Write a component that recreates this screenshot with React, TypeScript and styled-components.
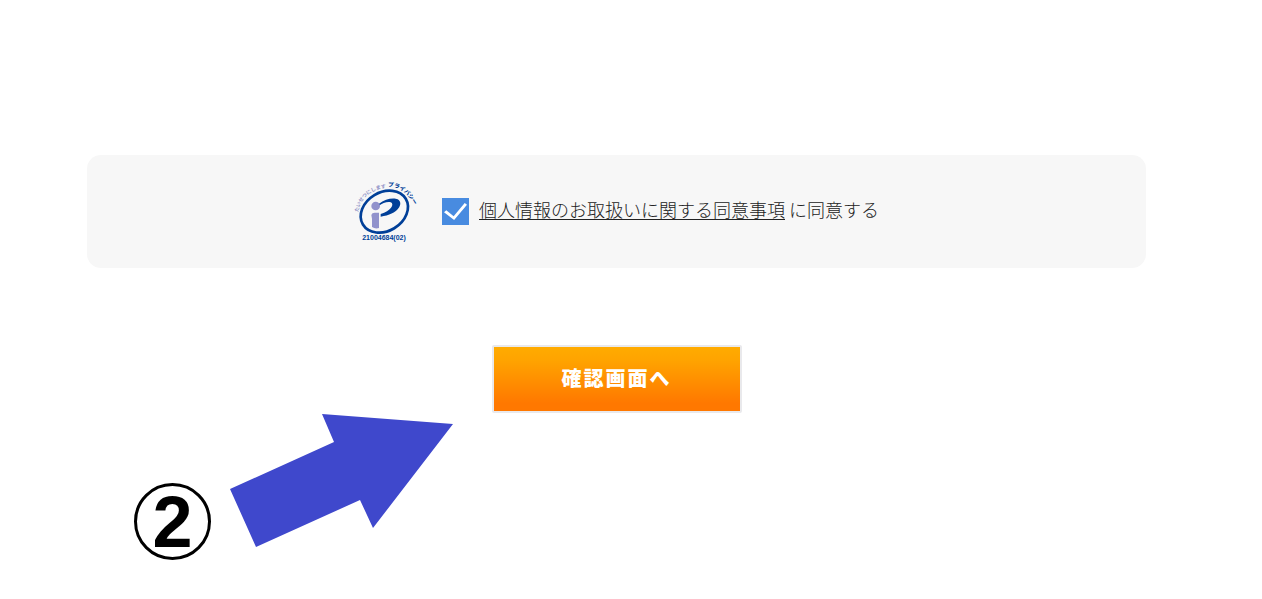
import React, { useState } from "react";
import styled, { createGlobalStyle } from "styled-components";

const GlobalStyle = createGlobalStyle`
  *, *::before, *::after { box-sizing: border-box; }
  body {
    margin: 0;
    background: #fff;
    color: #222;
    font-family: "Noto Sans CJK JP", sans-serif;
  }
`;

const Page = styled.main`
  display: flex;
  flex-direction: column;
  padding: 155px 116px 32px 87px;
`;

const ConsentPanel = styled.section`
  display: flex;
  align-items: center;
  justify-content: center;
  gap: 28px;
  padding: 24px;
  border-radius: 14px;
  background: #f7f7f7;
`;

const MarkSvg = styled.svg`
  display: block;
  width: 60px;
  height: 65px;
  overflow: visible;
`;

const Consent = styled.div`
  display: flex;
  align-items: flex-start;
  gap: 10px;
`;

const Checkbox = styled.input`
  appearance: none;
  width: 27px;
  height: 27px;
  margin: 0;
  background: #488be0;
  display: grid;
  place-items: center;
  cursor: pointer;

  &:not(:checked) {
    background: #fff;
    border: 1px solid #aaa;
  }

  &:checked::before {
    content: "";
    width: 23px;
    height: 17px;
    background: #fff;
    clip-path: polygon(0 54%, 10% 42%, 42% 78%, 90% 0, 100% 10%, 44% 100%);
  }
`;

const ConsentText = styled.label`
  font-size: 18px;
  font-weight: 300;
  line-height: 22px;
`;

const TermsLink = styled.a`
  color: inherit;
  text-decoration: underline;
  text-decoration-thickness: 1px;
  text-underline-offset: 2px;
`;

const SubmitButton = styled.button`
  align-self: center;
  width: 250px;
  height: 68px;
  margin-top: 77px;
  padding: 0 0 4px;
  border: 2px solid #e9e9ec;
  border-radius: 2px;
  background: linear-gradient(#ffab00 0%, #ffa400 20%, #ff7800 88%, #ff7800 100%) padding-box;
  color: #fff;
  font: 900 20px "Noto Sans CJK JP", sans-serif;
  letter-spacing: 2px;
  cursor: pointer;
`;

const StepNote = styled.div`
  display: flex;
  align-items: flex-start;
  gap: 19px;
  padding-left: 47px;
`;

const StepNumber = styled.span`
  display: grid;
  place-items: center;
  width: 77px;
  height: 77px;
  margin-top: 70px;
  border: 3px solid #000;
  border-radius: 50%;
  color: #000;
  font: 700 72px/72px "Liberation Sans", sans-serif;
`;

const ArrowSvg = styled.svg`
  display: block;
  width: 224px;
  height: 134px;
`;

function PrivacyMark() {
  return (
    <MarkSvg viewBox="30 24 180 195" role="img" aria-label="プライバシーマーク">
      <defs>
        <path id="arc-left" d="M43 124 C48 86 76 56 126 51" />
        <path id="arc-right" d="M132 47 C164 46 190 62 214 110" />
      </defs>
      <g fontFamily='"Noto Sans CJK JP", sans-serif'>
        <text fontSize="15" fontWeight="700" fill="#8d90c6">
          <textPath href="#arc-left">たいせつにします</textPath>
        </text>
        <text fontSize="17" fontWeight="900" fill="#003f98">
          <textPath href="#arc-right">プライバシー</textPath>
        </text>
      </g>
      <ellipse
        cx="121"
        cy="122"
        rx="75"
        ry="58"
        transform="rotate(-31 121 122)"
        fill="none"
        stroke="#003f98"
        strokeWidth="8"
      />
      <path
        d="M105 98 C123 83 150 79 161 85 C181 96 163 131 110 137 L110 129 C140 121 153 99 140 94 C130 91 115 97 105 104 Z"
        fill="#003f98"
      />
      <circle cx="95" cy="105" r="13" fill="#9192cc" />
      <path
        d="M82 132 Q84 125 92 125 L105 125 L105 171 Q94 175 84 168 L84 143 Z"
        fill="#9192cc"
      />
      <text
        x="120"
        y="208"
        textAnchor="middle"
        fill="#003f98"
        fontFamily='"Liberation Sans", sans-serif'
        fontWeight="700"
        fontSize="21"
      >
        21004684(02)
      </text>
    </MarkSvg>
  );
}

export default function App() {
  const [agreed, setAgreed] = useState(true);

  return (
    <>
      <GlobalStyle />
      <Page>
        <ConsentPanel>
          <PrivacyMark />
          <Consent>
            <Checkbox
              id="agree"
              type="checkbox"
              checked={agreed}
              onChange={(e) => setAgreed(e.target.checked)}
            />
            <ConsentText htmlFor="agree">
              <TermsLink href="#terms">個人情報のお取扱いに関する同意事項</TermsLink> に同意する
            </ConsentText>
          </Consent>
        </ConsentPanel>
        <SubmitButton type="button">確認画面へ</SubmitButton>
        <StepNote>
          <StepNumber>2</StepNumber>
          <ArrowSvg viewBox="230 413 224 134" aria-hidden="true">
            <polygon
              points="230,489 334,442 322,414 453,424 373,528 360,500 256,547"
              fill="#3f48cc"
            />
          </ArrowSvg>
        </StepNote>
      </Page>
    </>
  );
}
